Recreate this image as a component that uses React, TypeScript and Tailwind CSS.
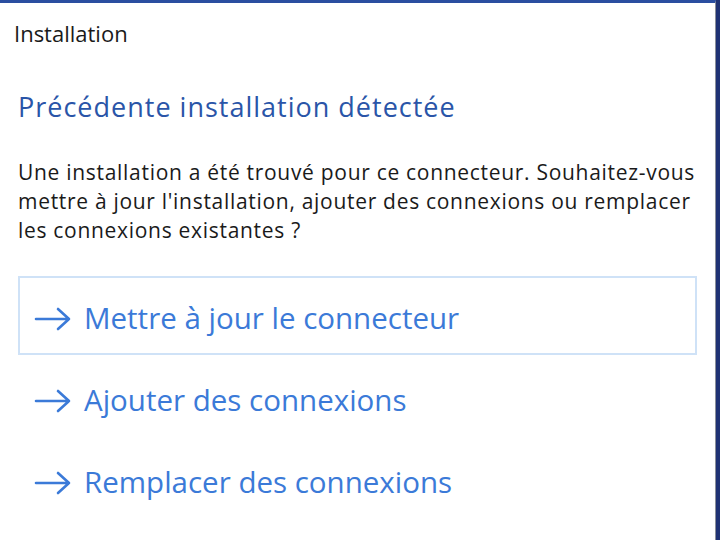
import React from 'react';

const Arrow = () => (
  <svg width="38" height="24" viewBox="0 0 38 24" fill="none" className="shrink-0">
    <path d="M2 12H35M24 2L35 12L24 22" stroke="#3b7ad8" strokeWidth="2.6" strokeLinecap="round" strokeLinejoin="round" />
  </svg>
);

const options = ['Mettre à jour le connecteur', 'Ajouter des connexions', 'Remplacer des connexions'];

export default function App() {
  return (
    <div className="w-[720px] h-[540px] flex bg-white overflow-hidden" style={{ fontFamily: '"Open Sans", "Noto Sans", sans-serif' }}>
      <div className="flex-1 flex flex-col border-t-[3px] border-t-[#2a4ea0] border-r border-r-[#8a8f99]">
        <div className="pl-[14px] pt-[16px] text-[22px] leading-[28px] text-[#1a1a1a]">Installation</div>
        <h1 className="pl-[18px] mt-[43px] text-[27px] leading-[34px] tracking-[1px] text-[#2a55a8]">Précédente installation détectée</h1>
        <p className="pl-[18px] pr-[4px] mt-[34px] text-[21px] leading-[29px] tracking-[0.7px] text-[#1a1a1a]">
          Une installation a été trouvé pour ce connecteur. Souhaitez-vous mettre à jour l'installation, ajouter des connexions ou remplacer les connexions existantes ?
        </p>
        <div className="mt-[31px] flex flex-col gap-[3px]">
          {options.map((label, i) => (
            <div
              key={label}
              className={`ml-[18px] w-[679px] h-[79px] flex items-center gap-[12px] pl-[14px] pt-[6px] border-2 ${i === 0 ? 'border-[#cfe2f7]' : 'border-transparent'}`}
            >
              <Arrow />
              <span className="text-[29.5px] text-[#3b7ad8]">{label}</span>
            </div>
          ))}
        </div>
      </div>
      <div className="w-[4px] bg-[#1f3274]" />
    </div>
  );
}
